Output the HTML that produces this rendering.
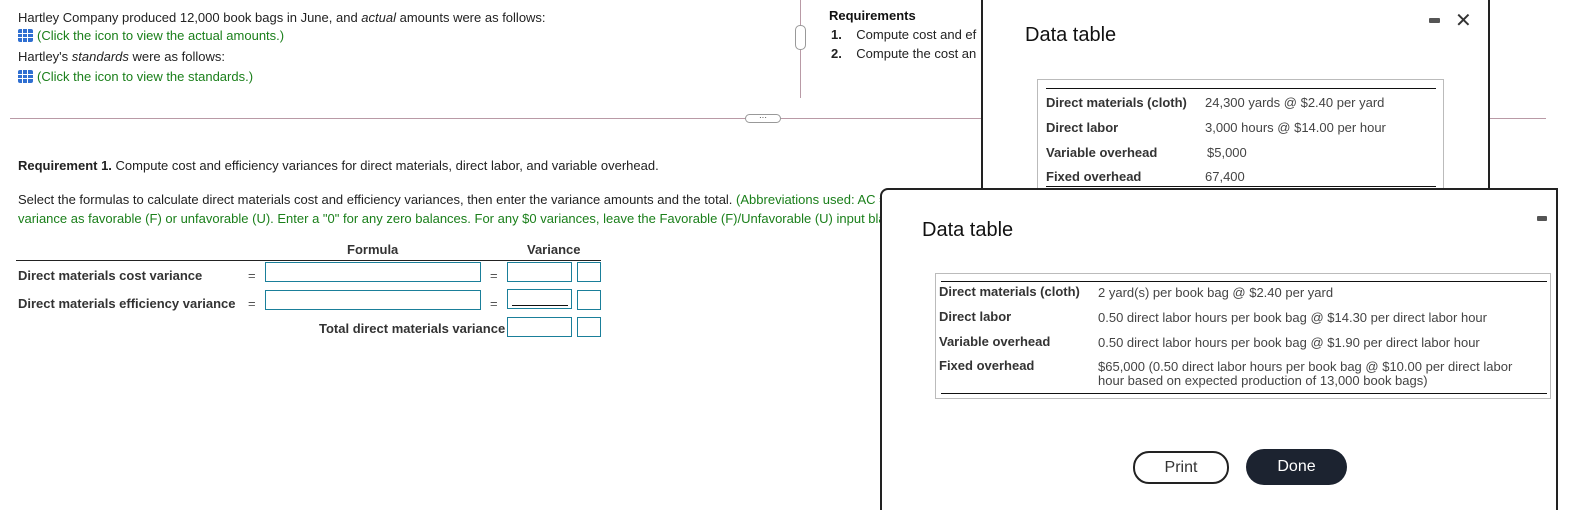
<!DOCTYPE html>
<html style="width:1574px;height:510px;overflow:hidden"><head><style>
*{box-sizing:border-box;margin:0;padding:0}
body{width:1574px;height:510px;overflow:hidden;background:#fff;font-family:"Liberation Sans",Arial,sans-serif;font-size:13px;color:#222;position:relative}
.a{position:absolute;white-space:nowrap}
.g{color:#1a7f1a}
.ic{display:inline-block;width:15px;height:13px;background:#2f6fd1;border-radius:2px;vertical-align:-2px;margin-right:4px;background-image:linear-gradient(90deg,transparent 4px,#fff 4px,#fff 5px,transparent 5px,transparent 9px,#fff 9px,#fff 10px,transparent 10px),linear-gradient(transparent 4px,#fff 4px,#fff 5px,transparent 5px,transparent 8px,#fff 8px,#fff 9px,transparent 9px)}
.b{font-weight:bold;color:#333}
.box{position:absolute;border:1px solid #1a7f9a;height:20px}
.dlg{position:absolute;background:#fff;border:2px solid #222}
.dt{position:absolute;font-size:20px;color:#111}
.tb{position:absolute;border:1px solid #bbb}
</style></head><body>
<div class="a" style="left:18px;top:10px">Hartley Company produced 12,000 book bags in June, and <i>actual</i> amounts were as follows:</div>
<div class="a g" style="left:18px;top:28px"><span class="ic"></span>(Click the icon to view the actual amounts.)</div>
<div class="a" style="left:18px;top:49px">Hartley's <i>standards</i> were as follows:</div>
<div class="a g" style="left:18px;top:69px"><span class="ic"></span>(Click the icon to view the standards.)</div>
<div class="a" style="left:10px;top:118px;width:1536px;height:1px;background:#b99aa6"></div>
<div class="a" style="left:745px;top:114px;width:36px;height:9px;border:1px solid #999;border-radius:5px;background:#fff;font-size:8px;line-height:6px;text-align:center">···</div>
<div class="a" style="left:800px;top:0;width:1px;height:98px;background:#b99aa6"></div>
<div class="a" style="left:795px;top:25px;width:11px;height:25px;border:1px solid #999;border-radius:5px;background:#fff"></div>
<div class="a b" style="left:829px;top:8px;color:#111">Requirements</div>
<div class="a" style="left:831px;top:27px"><b>1.</b>&nbsp;&nbsp;&nbsp;&nbsp;Compute cost and ef</div>
<div class="a" style="left:831px;top:46px"><b>2.</b>&nbsp;&nbsp;&nbsp;&nbsp;Compute the cost an</div>
<div class="a" style="left:18px;top:158px"><b>Requirement 1.</b> Compute cost and efficiency variances for direct materials, direct labor, and variable overhead.</div>
<div class="a" style="left:18px;top:192px">Select the formulas to calculate direct materials cost and efficiency variances, then enter the variance amounts and the total. <span class="g">(Abbreviations used: AC =</span></div>
<div class="a g" style="left:18px;top:211px">variance as favorable (F) or unfavorable (U). Enter a "0" for any zero balances. For any $0 variances, leave the Favorable (F)/Unfavorable (U) input bla</div>
<div class="a b" style="left:347px;top:242px">Formula</div>
<div class="a b" style="left:527px;top:242px">Variance</div>
<div class="a" style="left:16px;top:260px;width:585px;height:1px;background:#222"></div>
<div class="a b" style="left:18px;top:268px">Direct materials cost variance</div>
<div class="a" style="left:248px;top:268px;color:#555">=</div>
<div class="box" style="left:265px;top:262px;width:216px"></div>
<div class="a" style="left:490px;top:268px;color:#555">=</div>
<div class="box" style="left:507px;top:262px;width:65px"></div>
<div class="box" style="left:577px;top:262px;width:24px"></div>
<div class="a b" style="left:18px;top:296px">Direct materials efficiency variance</div>
<div class="a" style="left:248px;top:296px;color:#555">=</div>
<div class="box" style="left:265px;top:290px;width:216px"></div>
<div class="a" style="left:490px;top:296px;color:#555">=</div>
<div class="box" style="left:507px;top:289px;width:65px"></div>
<div class="a" style="left:512px;top:305px;width:56px;height:1px;background:#111"></div>
<div class="box" style="left:577px;top:290px;width:24px"></div>
<div class="a b" style="left:319px;top:321px">Total direct materials variance</div>
<div class="box" style="left:507px;top:317px;width:65px"></div>
<div class="box" style="left:577px;top:317px;width:24px"></div>

<div class="dlg" style="left:981px;top:-10px;width:509px;height:210px">
<div class="dt" style="left:42px;top:32px">Data table</div>
<div class="a" style="left:446px;top:26px;width:11px;height:5px;background:#555;border-radius:1px"></div>
<div class="a" style="left:472px;top:16px;font-size:20px;color:#333">✕</div>
<div class="tb" style="left:54px;top:87px;width:407px;height:120px"></div>
<div class="a" style="left:63px;top:96px;width:390px;height:1px;background:#111"></div>
<div class="a" style="left:63px;top:194px;width:390px;height:1px;background:#111"></div>
<div class="a b" style="left:63px;top:103px">Direct materials (cloth)</div>
<div class="a" style="left:222px;top:103px;color:#444">24,300 yards @ $2.40 per yard</div>
<div class="a b" style="left:63px;top:128px">Direct labor</div>
<div class="a" style="left:222px;top:128px;color:#444">3,000 hours @ $14.00 per hour</div>
<div class="a b" style="left:63px;top:153px">Variable overhead</div>
<div class="a" style="left:224px;top:153px;color:#444">$5,000</div>
<div class="a b" style="left:63px;top:177px">Fixed overhead</div>
<div class="a" style="left:222px;top:177px;color:#444">67,400</div>
</div>

<div class="dlg" style="left:880px;top:188px;width:678px;height:330px;border-top-left-radius:8px">
<div class="dt" style="left:40px;top:29px">Data table</div>
<div class="a" style="left:655px;top:26px;width:10px;height:5px;background:#555;border-radius:1px"></div>
<div class="tb" style="left:53px;top:83px;width:616px;height:126px"></div>
<div class="a" style="left:59px;top:91px;width:606px;height:1px;background:#111"></div>
<div class="a" style="left:59px;top:203px;width:606px;height:1px;background:#111"></div>
<div class="a b" style="left:57px;top:94px">Direct materials (cloth)</div>
<div class="a" style="left:216px;top:95px;color:#444">2 yard(s) per book bag @ $2.40 per yard</div>
<div class="a b" style="left:57px;top:119px">Direct labor</div>
<div class="a" style="left:216px;top:120px;color:#444">0.50 direct labor hours per book bag @ $14.30 per direct labor hour</div>
<div class="a b" style="left:57px;top:144px">Variable overhead</div>
<div class="a" style="left:216px;top:145px;color:#444">0.50 direct labor hours per book bag @ $1.90 per direct labor hour</div>
<div class="a b" style="left:57px;top:168px">Fixed overhead</div>
<div class="a" style="left:216px;top:170px;color:#444;line-height:14px;white-space:normal;width:430px">$65,000 (0.50 direct labor hours per book bag @ $10.00 per direct labor hour based on expected production of 13,000 book bags)</div>
<div class="a" style="left:251px;top:261px;width:96px;height:33px;border:2px solid #222;border-radius:16px;text-align:center;line-height:29px;font-size:16px;color:#333">Print</div>
<div class="a" style="left:364px;top:259px;width:101px;height:36px;background:#1c2330;border-radius:18px;text-align:center;line-height:36px;font-size:16px;color:#fff">Done</div>
</div>
</body></html>
